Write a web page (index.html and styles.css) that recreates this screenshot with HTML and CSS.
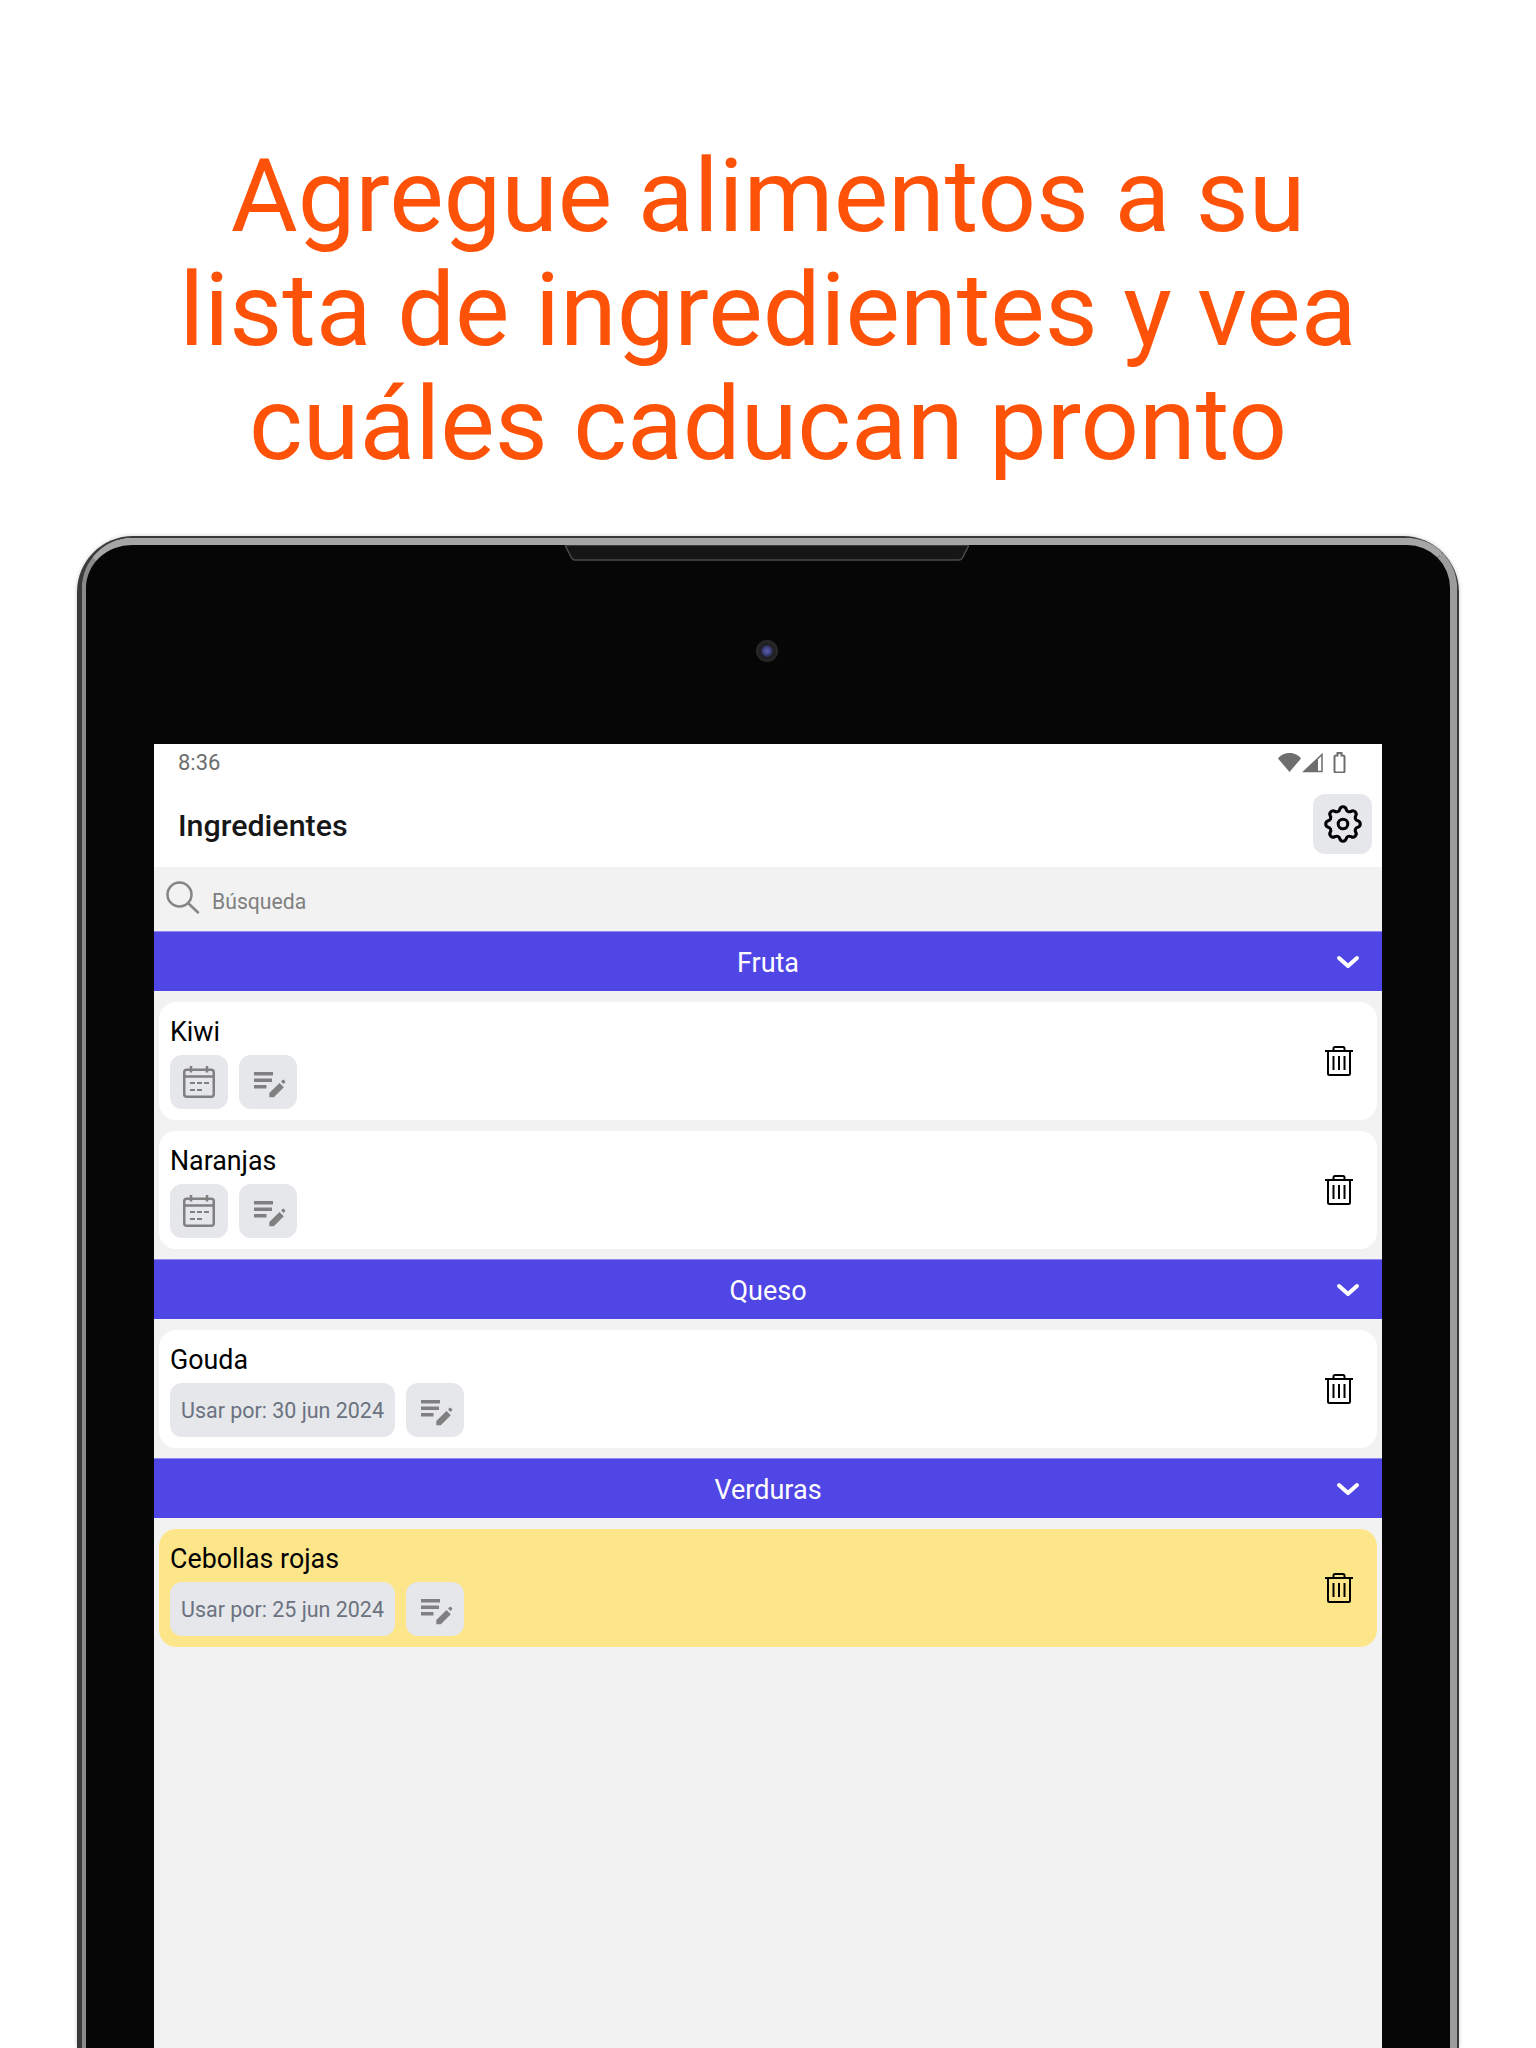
FILE: index.html
```html
<!DOCTYPE html>
<html lang="es">
<head>
  <meta charset="UTF-8" />
  <meta name="viewport" content="width=device-width, initial-scale=1.0"/>
  <title>Ingredientes</title>
  <link rel="stylesheet" href="styles.css">
</head>
<body>

  <svg class="sprites" width="0" height="0">
    <symbol id="i-calendar" viewBox="0 0 32 32">
      <rect x="1.250" y="3.750" width="29.500" height="27" rx="2.500" fill="none" stroke="currentColor" stroke-width="2.500"/>
      <path d="M1 10.500h30M8 0v6.500M24 0v6.500" fill="none" stroke="currentColor" stroke-width="2.500"/>
      <path d="M7 17h5M14 17h5M21 17h5M7 24h5M14 24h5" fill="none" stroke="currentColor" stroke-width="2.200"/>
    </symbol>
    <symbol id="i-note" viewBox="0 0 32 32">
      <path d="M0 6h19v3.500H0zM0 12.500h18v3.500H0zM0 19h12.500v3.500H0z" fill="currentColor"/>
      <path d="M15.300 27 25.500 17l4.300 4.300-10 10h-4.500zM27 15.500l1.300-1.300c.6-.6 1.400-.6 2 0l.5.5c.6.6.6 1.400 0 2l-1.300 1.300z" fill="currentColor"/>
    </symbol>
    <symbol id="i-trash" viewBox="0 0 30 30">
      <path d="M1 5h28M4 5v22.500c0 1 .6 1.500 1.500 1.500h19c.9 0 1.500-.5 1.500-1.500V5M9.500 5V2.500C9.500 1.500 10 1 11 1h8c1 0 1.500.5 1.500 1.500V5M9.500 10v14M15 10v14M20.500 10v14" fill="none" stroke="currentColor" stroke-width="2"/>
    </symbol>
    <symbol id="i-chevron" viewBox="0 0 24 14">
      <path d="M3 3l9 8 9-8" fill="none" stroke="currentColor" stroke-width="4" stroke-linecap="round" stroke-linejoin="round"/>
    </symbol>
  </svg>

  <div class="page">
    <h1 class="headline">Agregue alimentos a su<br>lista de ingredientes y vea<br>cuáles caducan pronto</h1>

    <div class="device">
      <div class="bezel">
        <svg class="notch" width="404" height="16" viewBox="0 0 404 16">
          <path d="M0 0h404l-6 12q-1.500 3-4 3H10q-2.500 0-4-3z" fill="#161616" stroke="#4a4a4a" stroke-width="1.500"/>
        </svg>
        <div class="camera"></div>

        <div class="screen">
          <div class="status">
            <span class="time">8:36</span>
            <svg class="status-icons" width="69" height="21" viewBox="0 0 69 21">
              <path d="M1 6.500C4 2.500 8.500 1 12.500 1s8.500 1.500 11.500 5.500L12.500 20z" fill="#6e6e6e"/>
              <path d="M27 19.500 45 2.500v17z" fill="none" stroke="#6e6e6e" stroke-width="1.500"/>
              <path d="M26 20 41 6v14z" fill="#6e6e6e"/>
              <path d="M59 3.500h1.500V1h4v2.500H66q1.500 0 1.500 1.500v14q0 1.500-1.500 1.500h-7q-1.500 0-1.500-1.500V5q0-1.500 1.500-1.500z" fill="none" stroke="#6e6e6e" stroke-width="2"/>
            </svg>
          </div>

          <header class="topbar">
            <h2 class="title">Ingredientes</h2>
            <button class="icon-btn settings">
              <svg width="46" height="46" viewBox="0 0 24 24" fill="none" stroke="#000" stroke-width="1.600">
                <path d="M10.325 4.317c.426-1.756 2.924-1.756 3.350 0a1.724 1.724 0 002.573 1.066c1.543-.94 3.310.826 2.370 2.370a1.724 1.724 0 001.065 2.572c1.756.426 1.756 2.924 0 3.350a1.724 1.724 0 00-1.066 2.573c.94 1.543-.826 3.310-2.370 2.370a1.724 1.724 0 00-2.572 1.065c-.426 1.756-2.924 1.756-3.350 0a1.724 1.724 0 00-2.573-1.066c-1.543.94-3.310-.826-2.370-2.370a1.724 1.724 0 00-1.065-2.572c-1.756-.426-1.756-2.924 0-3.350a1.724 1.724 0 001.066-2.573c-.94-1.543.826-3.310 2.370-2.370.996.608 2.296.07 2.572-1.065z"/>
                <circle cx="12" cy="12" r="2.500"/>
              </svg>
            </button>
          </header>

          <div class="search">
            <svg width="36" height="36" viewBox="0 0 36 36" fill="none" stroke="#858585" stroke-width="2.500">
              <circle cx="13.500" cy="13.500" r="12"/>
              <path d="M22.500 22.500l9.500 9" stroke-linecap="round"/>
            </svg>
            <span class="search-text">Búsqueda</span>
          </div>

          <div class="category">
            Fruta
            <svg class="chevron"><use href="#i-chevron"/></svg>
          </div>
          <div class="cards">
            <div class="card">
              <div class="card-body">
                <div class="name">Kiwi</div>
                <div class="actions">
                  <button class="icon-btn"><svg class="ico-cal"><use href="#i-calendar"/></svg></button>
                  <button class="icon-btn"><svg class="ico-note"><use href="#i-note"/></svg></button>
                </div>
              </div>
              <svg class="trash"><use href="#i-trash"/></svg>
            </div>
            <div class="card">
              <div class="card-body">
                <div class="name">Naranjas</div>
                <div class="actions">
                  <button class="icon-btn"><svg class="ico-cal"><use href="#i-calendar"/></svg></button>
                  <button class="icon-btn"><svg class="ico-note"><use href="#i-note"/></svg></button>
                </div>
              </div>
              <svg class="trash"><use href="#i-trash"/></svg>
            </div>
          </div>

          <div class="category">
            Queso
            <svg class="chevron"><use href="#i-chevron"/></svg>
          </div>
          <div class="cards">
            <div class="card">
              <div class="card-body">
                <div class="name">Gouda</div>
                <div class="actions">
                  <span class="date-chip">Usar por: 30 jun 2024</span>
                  <button class="icon-btn"><svg class="ico-note"><use href="#i-note"/></svg></button>
                </div>
              </div>
              <svg class="trash"><use href="#i-trash"/></svg>
            </div>
          </div>

          <div class="category">
            Verduras
            <svg class="chevron"><use href="#i-chevron"/></svg>
          </div>
          <div class="cards">
            <div class="card expiring">
              <div class="card-body">
                <div class="name">Cebollas rojas</div>
                <div class="actions">
                  <span class="date-chip">Usar por: 25 jun 2024</span>
                  <button class="icon-btn"><svg class="ico-note"><use href="#i-note"/></svg></button>
                </div>
              </div>
              <svg class="trash"><use href="#i-trash"/></svg>
            </div>
          </div>
        </div>
      </div>
    </div>
  </div>

</body>
</html>
```

FILE: styles.css
```css
html, body {
  margin: 0;
  padding: 0;
  background: #fff;
}

.sprites {
  display: block;
  height: 0;
}

.page {
  height: 2048px;
  overflow: hidden;
  display: flex;
  flex-direction: column;
  font-family: Roboto, sans-serif;
}

.headline {
  margin: 0;
  padding: 139px 0 55px;
  height: 342px;
  text-align: center;
  font-size: 102.700px;
  line-height: 114px;
  font-weight: 400;
  color: #ff5209;
}

.device {
  flex: 1;
  margin: 0 77px;
  border-style: solid;
  border-width: 2px 2px 0 5px;
  border-color: #3a3a3a;
  border-radius: 56px 56px 0 0;
  box-shadow: 0 0 4px rgba(0, 0, 0, 0.2);
  display: flex;
}

.bezel {
  flex: 1;
  position: relative;
  padding: 199px 68px 0 68px;
  background: #060606;
  border-style: solid;
  border-width: 7px 7px 0 4px;
  border-color: #a6a6a6 #9c9c9c #a6a6a6 #8a8a8a;
  border-radius: 50px 50px 0 0;
  display: flex;
}

.notch {
  position: absolute;
  top: 0;
  left: 479px;
  display: block;
}

.camera {
  position: absolute;
  top: 95px;
  left: 670px;
  width: 22px;
  height: 22px;
  border-radius: 50%;
  background: radial-gradient(circle, #5a60a8 0, #3c4080 25%, #1e1e22 42%, #2a2a2a 70%, #0a0a0a 100%);
}

.screen {
  flex: 1;
  background: #f2f2f2;
  display: flex;
  flex-direction: column;
}

.status {
  height: 36px;
  background: #fff;
  display: flex;
  justify-content: space-between;
  align-items: center;
  padding: 0 36px 0 24px;
}

.time {
  font-size: 22px;
  color: #6e6e6e;
}

.status-icons {
  display: block;
}

.topbar {
  height: 87px;
  background: #fff;
  display: flex;
  justify-content: space-between;
  align-items: flex-start;
  padding: 14px 10px 0 24px;
  box-sizing: border-box;
}

.title {
  margin: 0;
  padding-top: 14px;
  font-size: 30.400px;
  line-height: 36px;
  font-weight: 500;
  color: #171717;
}

.icon-btn {
  width: 58px;
  height: 54px;
  padding: 0;
  border: none;
  border-radius: 12px;
  background: #e5e7eb;
  color: #808080;
  display: flex;
  align-items: center;
  justify-content: center;
  flex-shrink: 0;
}

.settings {
  width: 59px;
  height: 60px;
}

.search {
  height: 64px;
  display: flex;
  align-items: center;
  gap: 10px;
  padding-left: 12px;
}

.search-text {
  margin-top: 4px;
  font-size: 21.200px;
  color: #808080;
}

.category {
  position: relative;
  height: 60px;
  flex-shrink: 0;
  background: #4f46e5;
  border-top: 1px solid #8f89f0;
  padding-top: 2px;
  box-sizing: border-box;
  display: flex;
  align-items: center;
  justify-content: center;
  font-size: 27px;
  color: #fff;
}

.chevron {
  position: absolute;
  top: 23px;
  right: 22px;
  width: 24px;
  height: 14px;
}

.cards {
  padding: 11px 5px 10px 5px;
  display: flex;
  flex-direction: column;
  gap: 11px;
}

.card {
  height: 118px;
  box-sizing: border-box;
  background: #fff;
  border-radius: 17px;
  padding: 0 23px 0 11px;
  display: flex;
  align-items: center;
  justify-content: space-between;
}

.card.expiring {
  background: #fde68a;
}

.card-body {
  display: flex;
  flex-direction: column;
  gap: 3px;
}

.name {
  font-size: 26.800px;
  line-height: 39px;
  color: #000;
}

.actions {
  display: flex;
  gap: 11px;
}

.date-chip {
  height: 54px;
  box-sizing: border-box;
  padding: 0 11px;
  border-radius: 12px;
  background: #e5e7eb;
  display: flex;
  align-items: center;
  font-size: 21.450px;
  color: #6b7280;
}

.ico-cal, .ico-note {
  width: 32px;
  height: 32px;
}

.ico-note {
  margin-left: 4px;
}

.trash {
  width: 30px;
  height: 30px;
  color: #000;
}
```
